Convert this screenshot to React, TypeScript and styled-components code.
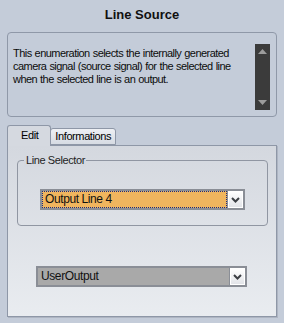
import React, { useState } from 'react';
import styled, { createGlobalStyle } from 'styled-components';

const GlobalStyle = createGlobalStyle`
  html, body {
    margin: 0;
    padding: 0;
    background: #c4ccd9;
  }
  * {
    box-sizing: border-box;
  }
`;

const Chevron: React.FC = () => (
  <svg width="9" height="6" viewBox="0 0 9 6">
    <path d="M1 1 L4.5 4.5 L8 1" fill="none" stroke="#3c3f44" strokeWidth="2" />
  </svg>
);

const Arrow: React.FC<{ down?: boolean }> = ({ down }) => (
  <svg width="9" height="5" viewBox="0 0 9 5">
    <path d={down ? 'M0 0 L9 0 L4.5 5 Z' : 'M0 5 L9 5 L4.5 0 Z'} fill="#9c9c9c" />
  </svg>
);

type DropdownProps = {
  value: string;
  focused?: boolean;
};

const Dropdown: React.FC<DropdownProps> = ({ value, focused }) => (
  <SelectFrame $focused={focused}>
    <SelectValue $focused={focused}>{value}</SelectValue>
    <SelectButton>
      <Chevron />
    </SelectButton>
  </SelectFrame>
);

const App: React.FC = () => {
  const [tab, setTab] = useState<string>('Edit');

  return (
    <>
      <GlobalStyle />
      <Page>
        <Title>Line Source</Title>
        <DescBox>
          <DescText>
            This enumeration selects the internally generated camera signal (source signal) for the selected line
            when the selected line is an output.
          </DescText>
          <ScrollBar>
            <Arrow />
            <Arrow down />
          </ScrollBar>
        </DescBox>
        <TabRow>
          <Tab $active={tab === 'Edit'} onClick={() => setTab('Edit')}>
            Edit
          </Tab>
          <Tab $active={tab === 'Informations'} onClick={() => setTab('Informations')}>
            Informations
          </Tab>
        </TabRow>
        <Panel>
          <GroupBox>
            <Legend>Line Selector</Legend>
            <Dropdown value="Output Line 4" focused />
          </GroupBox>
          <BottomRow>
            <Dropdown value="UserOutput" />
          </BottomRow>
        </Panel>
      </Page>
    </>
  );
};

export default App;

const Page = styled.div`
  width: 284px;
  height: 323px;
  padding: 0 7px;
  display: flex;
  flex-direction: column;
  font-family: 'Liberation Sans', Arial, sans-serif;
  font-size: 11px;
  letter-spacing: -0.4px;
  color: #000;
  background: #c4ccd9;
`;

const Title = styled.div`
  flex: none;
  height: 32px;
  padding-top: 7px;
  text-align: center;
  font-size: 13px;
  font-weight: bold;
  letter-spacing: 0;
  color: #101010;
`;

const DescBox = styled.div`
  flex: none;
  height: 85px;
  display: flex;
  border: 1px solid #8f98a8;
  border-radius: 4px;
  padding: 11px 6px 6px 5px;
`;

const DescText = styled.div`
  flex: 1;
  padding-top: 3px;
  line-height: 13px;
  letter-spacing: -0.55px;
  word-spacing: 0.5px;
  color: #0c0c0c;
`;

const ScrollBar = styled.div`
  width: 15px;
  margin-left: 4px;
  background: #3b3b3b;
  display: flex;
  flex-direction: column;
  justify-content: space-between;
  align-items: center;
  padding: 5px 0 5px;
`;

const TabRow = styled.div`
  flex: none;
  margin-top: 8px;
  display: flex;
  align-items: flex-end;
  height: 20px;
  position: relative;
  z-index: 1;
`;

const Tab = styled.div<{ $active?: boolean }>`
  height: ${(p) => (p.$active ? '21px' : '17px')};
  margin-bottom: ${(p) => (p.$active ? '-1px' : '0')};
  padding: ${(p) => (p.$active ? '3px 12px 0 13px' : '1px 4px 0 4px')};
  border: 1px solid #8e97a7;
  border-bottom: ${(p) => (p.$active ? 'none' : '1px solid #8e97a7')};
  border-radius: 3px 3px 0 0;
  background: ${(p) => (p.$active ? '#d5d9e0' : 'linear-gradient(#eef0f4, #d6dbe3)')};
  margin-left: ${(p) => (p.$active ? '0' : '-1px')};
  cursor: default;
`;

const Panel = styled.div`
  flex: none;
  height: 172px;
  border: 1px solid #8e97a7;
  background: linear-gradient(#d4d8df, #e9ecf0);
  box-shadow: 1px 1px 0 #aeb5c2;
  padding: 14px 8px 29px 9px;
  display: flex;
  flex-direction: column;
  justify-content: space-between;
`;

const GroupBox = styled.div`
  flex: none;
  position: relative;
  height: 66px;
  border: 1px solid #9096a2;
  border-radius: 4px;
  padding: 28px 0 0 22px;
`;

const Legend = styled.span`
  position: absolute;
  top: -8px;
  left: 6px;
  padding: 0 1px 0 2px;
  background: #d5d9e0;
  color: #1e1e1e;
  font-size: 11px;
  line-height: 14px;
`;

const BottomRow = styled.div`
  flex: none;
  padding-left: 19px;
`;

const SelectFrame = styled.div<{ $focused?: boolean }>`
  display: flex;
  width: ${(p) => (p.$focused ? '205px' : '211px')};
  height: 21px;
  background: #8a8e96;
  padding: 2px;
`;

const SelectValue = styled.div<{ $focused?: boolean }>`
  flex: 1;
  background: ${(p) => (p.$focused ? '#f0b55e' : '#a9a9a9')};
  border: ${(p) => (p.$focused ? '1px dotted #1a2a80' : '1px solid #a9a9a9')};
  padding-left: 2px;
  line-height: 15px;
  font-size: 12px;
  color: #111;
  margin-right: 1px;
`;

const SelectButton = styled.div`
  width: 15px;
  background: linear-gradient(#ffffff, #e2e4e8);
  border: 1px solid #ffffff;
  display: flex;
  align-items: center;
  justify-content: center;
`;
